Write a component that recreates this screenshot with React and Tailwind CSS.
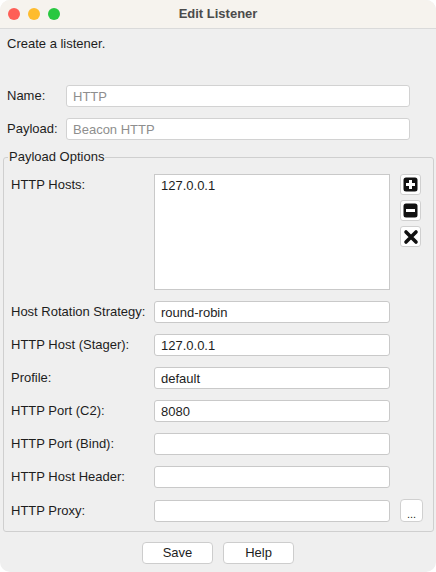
import React from 'react'

const inputCls =
  'h-[22px] bg-white border border-[#c9c9c9] rounded-[3px] px-[6px] text-[13px] leading-[20px] text-[#1d1d1d] outline-none'

function PlusIcon() {
  return (
    <svg width="15" height="15" viewBox="0 0 15 15">
      <rect x="0.5" y="0.5" width="14" height="14" rx="2.5" fill="#111" />
      <rect x="6" y="3" width="3" height="9" fill="#fff" />
      <rect x="3" y="6" width="9" height="3" fill="#fff" />
    </svg>
  )
}

function MinusIcon() {
  return (
    <svg width="15" height="15" viewBox="0 0 15 15">
      <rect x="0.5" y="0.5" width="14" height="14" rx="2.5" fill="#111" />
      <rect x="3" y="6" width="9" height="3" fill="#fff" />
    </svg>
  )
}

function CloseIcon() {
  return (
    <svg width="16" height="16" viewBox="0 0 16 16">
      <path d="M3 3 L13 13 M13 3 L3 13" stroke="#111" strokeWidth="3.6" strokeLinecap="round" />
    </svg>
  )
}

function ToolButton({ children }) {
  return (
    <button className="w-[21px] h-[21px] flex items-center justify-center bg-white border border-[#d0d0d0] rounded-[3px]">
      {children}
    </button>
  )
}

function Row({ label, value, extra }) {
  return (
    <div className="flex items-center">
      <span className="w-[143px] shrink-0">{label}</span>
      <input readOnly value={value || ''} className={`${inputCls} w-[236px]`} />
      {extra}
    </div>
  )
}

export default function App() {
  const rows = [
    { label: 'Host Rotation Strategy:', value: 'round-robin' },
    { label: 'HTTP Host (Stager):', value: '127.0.0.1' },
    { label: 'Profile:', value: 'default' },
    { label: 'HTTP Port (C2):', value: '8080' },
    { label: 'HTTP Port (Bind):', value: '' },
    { label: 'HTTP Host Header:', value: '' }
  ]

  return (
    <div
      className="w-[436px] h-[572px] bg-white text-[13px] leading-[16px] text-[#1d1d1d]"
      style={{ fontFamily: '"Liberation Sans", Arial, sans-serif' }}
    >
      <div className="h-full flex flex-col bg-[#efefef] rounded-[10px] overflow-hidden">
        {/* Title bar */}
        <div className="h-[29px] shrink-0 grid grid-cols-[1fr_auto_1fr] items-center bg-[#f6f3ee] border-b border-[#dadada]">
          <div className="flex items-center gap-[8px] pl-[8px]">
            <span className="w-[12px] h-[12px] rounded-full bg-[#fe5f57]" />
            <span className="w-[12px] h-[12px] rounded-full bg-[#febc2e]" />
            <span className="w-[12px] h-[12px] rounded-full bg-[#28c840]" />
          </div>
          <span className="font-bold text-[#4b4b4b]">Edit Listener</span>
          <div />
        </div>

        <div className="px-[7px] pt-[7px]">
          <p>Create a listener.</p>

          <div className="mt-[33px] flex flex-col gap-[11px]">
            <div className="flex items-center">
              <span className="w-[59px] shrink-0">Name:</span>
              <input readOnly value="HTTP" className={`${inputCls} w-[344px] bg-[#ececec] border-[#d2d2d2] text-[#8e8e8e]`} />
            </div>
            <div className="flex items-center">
              <span className="w-[59px] shrink-0">Payload:</span>
              <input readOnly value="Beacon HTTP" className={`${inputCls} w-[344px] bg-[#ececec] border-[#d2d2d2] text-[#8e8e8e]`} />
            </div>
          </div>
        </div>

        <fieldset className="mx-[3px] mt-[9px] border border-[#cfcfcf] rounded-[3px] pl-[7px] pr-[10px] pb-[9px] pt-[9px] w-[430px]">
          <legend className="ml-[-3px] px-[1px] leading-[16px]">Payload Options</legend>

          <div className="flex flex-col gap-[11px]">
            <div className="flex items-start">
              <span className="w-[143px] shrink-0 pt-[3px]">HTTP Hosts:</span>
              <div className="w-[236px] h-[116px] bg-white border border-[#c9c9c9] px-[6px] pt-[3px]">127.0.0.1</div>
              <div className="ml-[10px] flex flex-col gap-[5px]">
                <ToolButton><PlusIcon /></ToolButton>
                <ToolButton><MinusIcon /></ToolButton>
                <ToolButton><CloseIcon /></ToolButton>
              </div>
            </div>

            {rows.map((r) => (
              <Row key={r.label} label={r.label} value={r.value} />
            ))}

            <Row
              label="HTTP Proxy:"
              value=""
              extra={
                <button className="ml-[10px] w-[23px] h-[23px] bg-white border border-[#d0d0d0] rounded-[4px] text-[11px] leading-[10px] pb-[2px] flex items-end justify-center">
                  ...
                </button>
              }
            />
          </div>
        </fieldset>

        <div className="flex justify-center gap-[10px] mt-[10px]">
          <button className="w-[71px] h-[22px] bg-white border border-[#cdcdcd] rounded-[4px]">Save</button>
          <button className="w-[71px] h-[22px] bg-white border border-[#cdcdcd] rounded-[4px]">Help</button>
        </div>
      </div>
    </div>
  )
}
